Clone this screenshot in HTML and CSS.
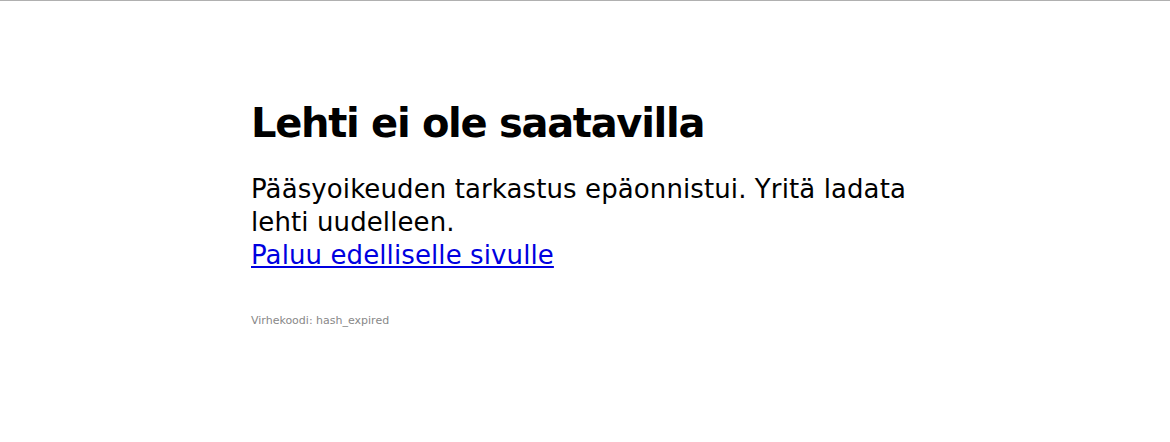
FILE: index.html
```html
<!DOCTYPE html>
<html lang="fi">
<head>
<meta charset="utf-8">
<title>Lehti ei ole saatavilla</title>
<link rel="stylesheet" href="styles.css">
</head>
<body>
<div class="topline"></div>
<main class="content">
  <h1 class="title">Lehti ei ole saatavilla</h1>
  <p class="message">Pääsyoikeuden tarkastus epäonnistui. Yritä ladata lehti uudelleen.<br><a class="back" href="#">Paluu edelliselle sivulle</a></p>
  <p class="code">Virhekoodi: hash_expired</p>
</main>
</body>
</html>
```
FILE: styles.css
```css
html, body {
  margin: 0;
  padding: 0;
  background: #fff;
}
body {
  font-family: "DejaVu Sans", Verdana, sans-serif;
  color: #000;
}
.topline {
  height: 1px;
  background: #b0b0b0;
}
.content {
  width: 668px;
  margin: 0 auto;
  padding-top: 98px;
}
.title {
  font-size: 40px;
  font-weight: bold;
  letter-spacing: -1.3px;
  line-height: 48px;
  margin: 0 0 26px 0;
}
.message {
  font-size: 26px;
  letter-spacing: 0.1px;
  line-height: 33px;
  margin: 0;
}
.back {
  color: #0000e0;
  text-decoration: underline;
}
.code {
  font-size: 11px;
  color: #888;
  margin: 42px 0 0 0;
}
```
